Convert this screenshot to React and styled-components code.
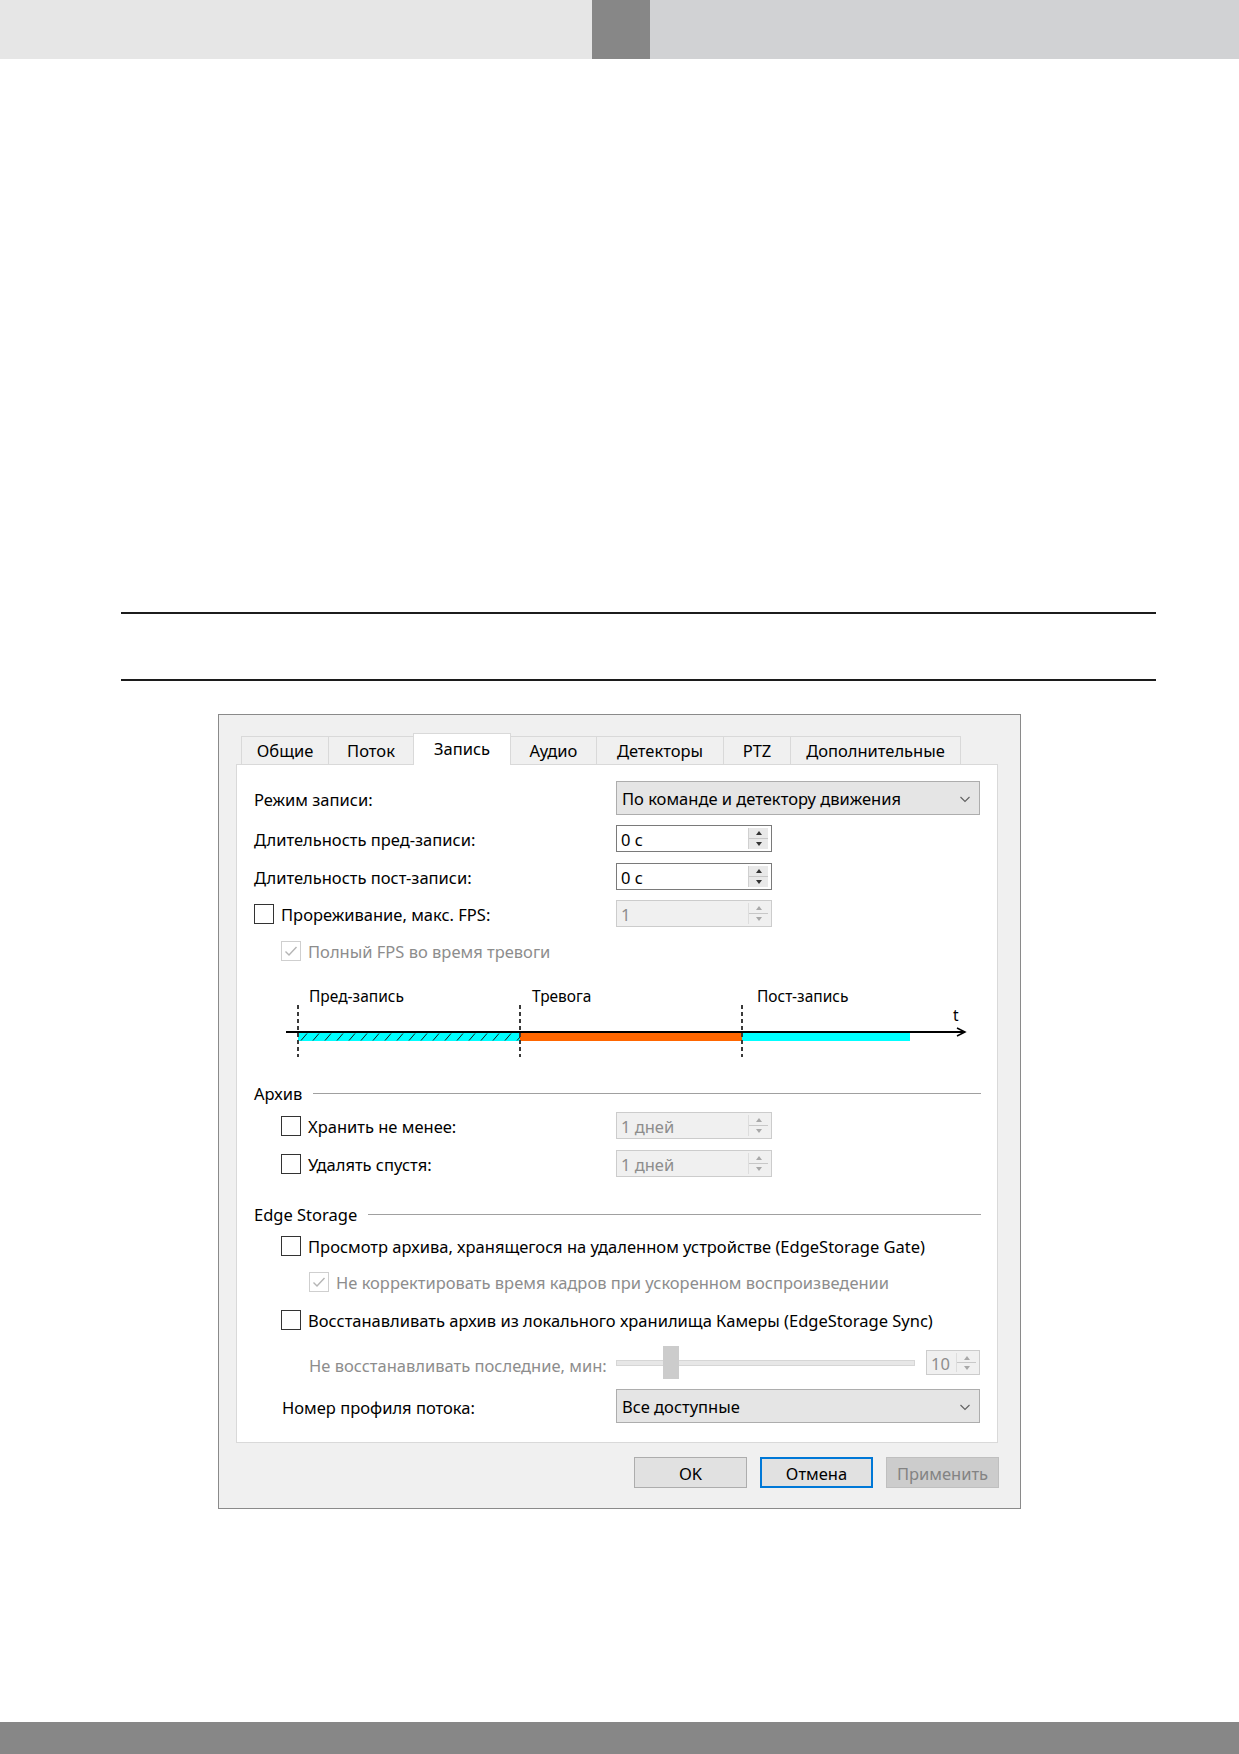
import React from 'react'
import styled, { createGlobalStyle } from 'styled-components'

const GlobalStyle = createGlobalStyle`
  html, body {
    margin: 0;
    padding: 0;
    background: #fff;
  }
  body {
    font-family: "Noto Sans", "Liberation Sans", sans-serif;
    font-size: 16.5px;
    color: #000;
  }
  * {
    box-sizing: border-box;
  }
`

const Page = styled.div`
  width: 1239px;
  height: 1754px;
  display: flex;
  flex-direction: column;
`

const TopBar = styled.div`
  display: flex;
  height: 59px;
`

const BarPart = styled.div`
  flex: ${p => (p.$w ? 'none' : 1)};
  width: ${p => (p.$w ? `${p.$w}px` : 'auto')};
  background: ${p => p.$color};
`

const Header = styled.div`
  margin: 553px 83px 0 121px;
  height: 69px;
  border-top: 2px solid #1c1c1c;
  border-bottom: 2px solid #1c1c1c;
`

const BottomBar = styled.div`
  margin-top: auto;
  height: 32px;
  background: #878787;
`

const Dialog = styled.div`
  margin: 33px 0 0 218px;
  width: 803px;
  height: 795px;
  border: 1px solid #8a8a8a;
  background: #f0f0f0;
  padding: 21px 22px 0 17px;
  display: flex;
  flex-direction: column;
`

const TabStrip = styled.div`
  display: flex;
  align-items: flex-end;
  height: 29px;
  margin-left: 6px;
  margin-bottom: -1px;
  position: relative;
  z-index: 1;
`

const Tab = styled.div`
  width: ${p => p.$w}px;
  height: ${p => (p.$active ? 32 : 29)}px;
  margin-left: -1px;
  border: 1px solid #d9d9d9;
  border-bottom: ${p => (p.$active ? 'none' : '1px solid #d9d9d9')};
  background: ${p => (p.$active ? '#fff' : '#f0f0f0')};
  display: flex;
  align-items: center;
  justify-content: center;
  padding-bottom: ${p => (p.$active ? 3 : 0)}px;
  position: relative;
  z-index: ${p => (p.$active ? 2 : 1)};
`

const Panel = styled.div`
  height: 679px;
  border: 1px solid #d9d9d9;
  background: #fff;
  padding: 16px 16px 0 17px;
  display: flex;
  flex-direction: column;
`

const Row = styled.div`
  display: grid;
  grid-template-columns: 362px 364px;
  align-items: center;
  height: ${p => p.$h || 27}px;
  margin-top: ${p => p.$mt || 0}px;
`

const Label = styled.div`
  display: flex;
  align-items: center;
  gap: 7px;
  padding-left: ${p => p.$indent || 0}px;
  padding-top: ${p => (p.$shift || 0) + 2}px;
  white-space: nowrap;
  color: ${p => (p.$disabled ? '#8d8d8d' : '#000')};
  grid-column: ${p => (p.$wide ? '1 / span 2' : 'auto')};
`

const Box = styled.span`
  width: 20px;
  height: 20px;
  flex: none;
  margin-top: -2px;
  border: 1px solid ${p => (p.$disabled ? '#cfcfcf' : '#333')};
  background: #fff;
  display: flex;
  align-items: center;
  justify-content: center;
`

const Select = styled.div`
  height: 34px;
  border: 1px solid #adadad;
  background: #e5e5e5;
  display: flex;
  align-items: center;
  justify-content: space-between;
  padding: 1px 8px 0 5px;
`

const Spin = styled.div`
  width: ${p => p.$w || 156}px;
  height: ${p => p.$h || 27}px;
  border: 1px solid ${p => (p.$disabled ? '#cccccc' : '#7a7a7a')};
  background: ${p => (p.$disabled ? '#f0f0f0' : '#fff')};
  color: ${p => (p.$disabled ? '#8d8d8d' : '#000')};
  display: flex;
  align-items: center;
  padding: 2px 3px 2px 4px;
`

const SpinValue = styled.span`
  flex: 1;
  padding-top: 1px;
`

const SpinButtons = styled.div`
  width: 20px;
  height: 100%;
  display: flex;
  flex-direction: column;
  background: ${p => (p.$disabled ? '#f0f0f0' : '#e9e9e9')};
  border-left: 1px solid ${p => (p.$disabled ? '#dddddd' : '#d0d0d0')};
`

const SpinHalf = styled.div`
  flex: 1;
  display: flex;
  align-items: center;
  justify-content: center;
  border-top: ${p => (p.$lower ? '1px solid #c8c8c8' : 'none')};
`

const Arrow = styled.span`
  width: 0;
  height: 0;
  border-left: 3.5px solid transparent;
  border-right: 3.5px solid transparent;
  ${p => (p.$down ? 'border-top' : 'border-bottom')}: 4px solid ${p => (p.$disabled ? '#a8a8a8' : '#333')};
`

const Group = styled.div`
  display: flex;
  align-items: center;
  height: 20px;
  margin-top: ${p => p.$mt || 0}px;
  white-space: nowrap;

  &::after {
    content: '';
    flex: 1;
    height: 1px;
    margin-left: 11px;
    background: #a0a0a0;
  }
`

const Timeline = styled.svg`
  display: block;
  margin-top: 10px;
  font-family: "Noto Sans", "Liberation Sans", sans-serif;
`

const SliderCell = styled.div`
  display: flex;
  align-items: center;
  gap: 11px;
`

const Track = styled.div`
  width: 299px;
  height: 33px;
  position: relative;
  display: flex;
  align-items: center;

  &::before {
    content: '';
    flex: 1;
    height: 4px;
    background: #e7e7e7;
    border: 1px solid #d6d6d6;
  }
`

const Thumb = styled.div`
  position: absolute;
  left: 47px;
  top: 0;
  width: 16px;
  height: 33px;
  background: #cccccc;
`

const ButtonRow = styled.div`
  display: flex;
  justify-content: flex-end;
  gap: 13px;
  margin: 14px -1px 0 0;
`

const Button = styled.div`
  width: 113px;
  height: 31px;
  display: flex;
  align-items: center;
  justify-content: center;
  padding-top: 1px;
  background: ${p => (p.$disabled ? '#cccccc' : '#e1e1e1')};
  color: ${p => (p.$disabled ? '#838383' : '#000')};
  border: ${p => (p.$default ? '2px solid #0078d7' : p.$disabled ? '1px solid #bfbfbf' : '1px solid #adadad')};
`

const Check = ({ checked, disabled }) => (
  <Box $disabled={disabled}>
    {checked && (
      <svg width="14" height="12" viewBox="0 0 14 12">
        <path d="M1.5 6.5 L5 10 L12.5 2" fill="none" stroke={disabled ? '#b5b5b5' : '#222'} strokeWidth="1.4" />
      </svg>
    )}
  </Box>
)

const Chevron = () => (
  <svg width="12" height="8" viewBox="0 0 12 8">
    <path d="M1.5 2 L6 6.5 L10.5 2" fill="none" stroke="#606060" strokeWidth="1.1" />
  </svg>
)

const SpinBox = ({ value, disabled, w, h }) => (
  <Spin $disabled={disabled} $w={w} $h={h}>
    <SpinValue>{value}</SpinValue>
    <SpinButtons $disabled={disabled}>
      <SpinHalf><Arrow $disabled={disabled} /></SpinHalf>
      <SpinHalf $lower><Arrow $down $disabled={disabled} /></SpinHalf>
    </SpinButtons>
  </Spin>
)

const tabs = [
  ['Общие', 88],
  ['Поток', 86],
  ['Запись', 98],
  ['Аудио', 87],
  ['Детекторы', 128],
  ['PTZ', 68],
  ['Дополнительные', 171],
]

const RecordTimeline = () => (
  <Timeline width="726" height="90" viewBox="0 0 726 90">
    <defs>
      <pattern id="hatch" width="12" height="8" patternUnits="userSpaceOnUse" x="44" y="59">
        <rect width="12" height="8" fill="#00ffff" />
        <line x1="3" y1="7.5" x2="9" y2="0.5" stroke="#1a1a1a" strokeWidth="1" />
      </pattern>
    </defs>
    <text x="55" y="28" fontSize="15.5">Пред-запись</text>
    <text x="278" y="28" fontSize="15.5">Тревога</text>
    <text x="503" y="28" fontSize="15.5">Пост-запись</text>
    <text x="699" y="47" fontSize="15.5">t</text>
    <rect x="44" y="59" width="222" height="8" fill="url(#hatch)" />
    <rect x="266" y="59" width="222" height="8" fill="#ff6600" />
    <rect x="488" y="59" width="168" height="8" fill="#00ffff" />
    <line x1="32" y1="58" x2="711" y2="58" stroke="#000" strokeWidth="2" />
    <polyline points="703,54 711,58 703,62" fill="none" stroke="#000" strokeWidth="1.5" />
    {[44, 266, 488].map(x => (
      <line key={x} x1={x} y1="31" x2={x} y2="83" stroke="#3a3a3a" strokeWidth="2" strokeDasharray="4 3" />
    ))}
  </Timeline>
)

export default function App() {
  return (
    <Page>
      <GlobalStyle />
      <TopBar>
        <BarPart $w={592} $color="#e6e6e6" />
        <BarPart $w={58} $color="#878787" />
        <BarPart $color="#d1d2d4" />
      </TopBar>

      <Header />

      <Dialog>
        <TabStrip>
          {tabs.map(([name, w]) => (
            <Tab key={name} $w={w} $active={name === 'Запись'}>{name}</Tab>
          ))}
        </TabStrip>

        <Panel>
          <Row $h={34}>
            <Label>Режим записи:</Label>
            <Select>
              <span>По команде и детектору движения</span>
              <Chevron />
            </Select>
          </Row>
          <Row $mt={10}>
            <Label>Длительность пред-записи:</Label>
            <SpinBox value="0 с" />
          </Row>
          <Row $mt={11}>
            <Label>Длительность пост-записи:</Label>
            <SpinBox value="0 с" />
          </Row>
          <Row $mt={10}>
            <Label><Check />Прореживание, макс. FPS:</Label>
            <SpinBox value="1" disabled />
          </Row>
          <Row $mt={10}>
            <Label $indent={27} $disabled $wide><Check checked disabled />Полный FPS во время тревоги</Label>
          </Row>

          <RecordTimeline />

          <Group $mt={19}>Архив</Group>
          <Row $mt={9}>
            <Label $indent={27}><Check />Хранить не менее:</Label>
            <SpinBox value="1 дней" disabled />
          </Row>
          <Row $mt={11}>
            <Label $indent={27}><Check />Удалять спустя:</Label>
            <SpinBox value="1 дней" disabled />
          </Row>

          <Group $mt={27}>Edge Storage</Group>
          <Row $mt={8}>
            <Label $indent={27} $wide><Check />Просмотр архива, хранящегося на удаленном устройстве (EdgeStorage Gate)</Label>
          </Row>
          <Row $mt={9}>
            <Label $indent={55} $disabled $wide><Check checked disabled />Не корректировать время кадров при ускоренном воспроизведении</Label>
          </Row>
          <Row $mt={11}>
            <Label $indent={27} $wide><Check />Восстанавливать архив из локального хранилища Камеры (EdgeStorage Sync)</Label>
          </Row>
          <Row $h={33} $mt={13}>
            <Label $indent={55} $disabled $shift={3}>Не восстанавливать последние, мин:</Label>
            <SliderCell>
              <Track><Thumb /></Track>
              <SpinBox value="10" disabled w={54} h={25} />
            </SliderCell>
          </Row>
          <Row $h={34} $mt={10}>
            <Label $indent={28}>Номер профиля потока:</Label>
            <Select>
              <span>Все доступные</span>
              <Chevron />
            </Select>
          </Row>
        </Panel>

        <ButtonRow>
          <Button>OK</Button>
          <Button $default>Отмена</Button>
          <Button $disabled>Применить</Button>
        </ButtonRow>
      </Dialog>

      <BottomBar />
    </Page>
  )
}
